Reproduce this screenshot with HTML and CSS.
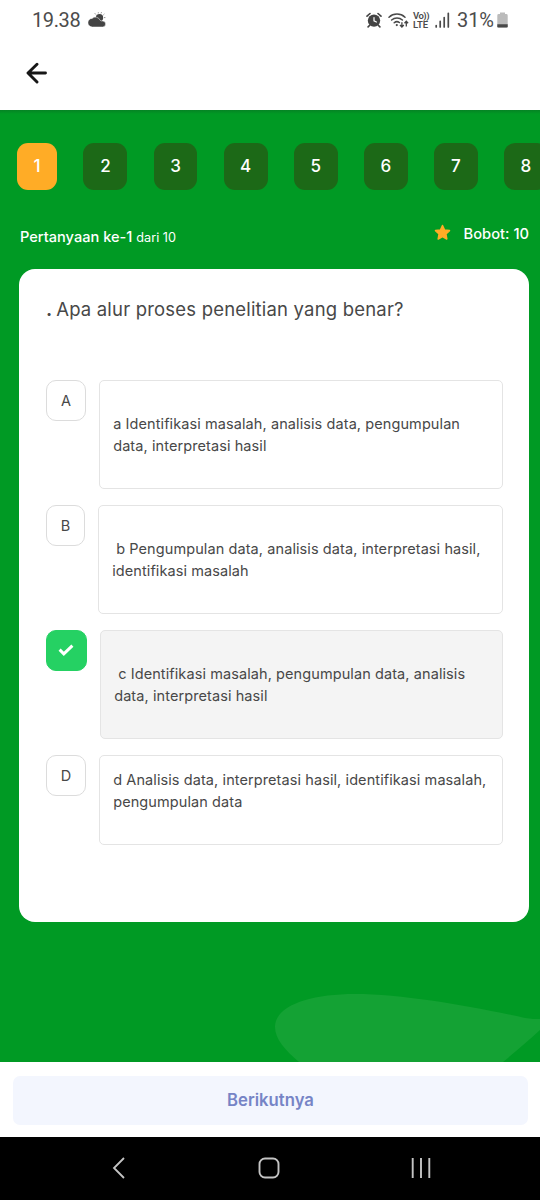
FILE: index.html
```html
<!DOCTYPE html>
<html lang="id">
<head>
<meta charset="utf-8">
<title>Pertanyaan</title>
<link rel="stylesheet" href="styles.css">
</head>
<body>
<div class="phone">
  <header class="top">
    <div class="status">
      <span class="clock">19.38</span>
      <svg class="weather" width="18" height="16" viewBox="0 0 18 16">
        <circle cx="11.500" cy="5.800" r="3.700" fill="#444"/>
        <g stroke="#777" stroke-width=".8" stroke-linecap="round"><path d="M7.600 2.200L7 1.500M10.300 1V.6M13.200 1l.2-.5M15.600 2.700l.5-.5M16.400 5.600h.6"/></g>
        <path d="M4.400 15a4.300 4.300 0 0 1-.3-8.600 5 5 0 0 1 8 1.900c.6.600 1.400.8 2.400.700a3 3 0 0 1 .2 6z" fill="#444" stroke="#fff" stroke-width=".5"/>
      </svg>
      <svg class="alarm" width="16" height="16" viewBox="0 0 16 16">
        <circle cx="8" cy="8.600" r="6.200" fill="#444"/>
        <path d="M1 4.200L4 1.500M15 4.200L12 1.500M3.700 13.200l-1.600 1.700M12.300 13.200l1.600 1.700" stroke="#444" stroke-width="1.600" stroke-linecap="round"/>
        <path d="M8 5.500v3.300l2.400 1.200" stroke="#fff" stroke-width="1.200" fill="none" stroke-linecap="round"/>
      </svg>
      <svg class="wifi" width="21" height="17" viewBox="0 0 21 17">
        <g fill="none" stroke="#4a4a4a" stroke-width="1.500" stroke-linecap="round"><path d="M1 5.200a11.800 11.800 0 0 1 16 0M3.600 8a8 8 0 0 1 10.800 0M6.200 10.800a4.200 4.200 0 0 1 5.200-.3"/></g>
        <circle cx="8.800" cy="13.100" r="1.100" fill="#4a4a4a"/>
        <path d="M13.900 10.200v4.600M12 13l1.900 2 1.900-2M18.300 14.600v-5M16.500 11.300l1.800-2 1.800 2" stroke="#444" stroke-width="1.300" fill="none"/>
      </svg>
      <span class="volte"><span class="vo">Vo))</span><span class="lte">LTE</span></span>
      <svg class="signal" width="15" height="16" viewBox="0 0 15 16"><path d="M1.200 15v-1.500M5.200 15V9.400M9.200 15V5.500M13.300 15V1.300" stroke="#4a4a4a" stroke-width="1.700" stroke-linecap="round"/></svg>
      <span class="percent">31%</span>
      <svg class="battery" width="11" height="16" viewBox="0 0 11 16"><path d="M3 2V.6h5V2h1.300A1.400 1.400 0 0 1 10.700 3.400V15.500H.300V3.400A1.400 1.400 0 0 1 1.700 2z" fill="#bbb"/><path d="M.3 12.300h10.400v2a1.200 1.200 0 0 1-1.200 1.200h-8A1.200 1.200 0 0 1 .3 14.300z" fill="#484848"/></svg>
    </div>
    <svg class="back" width="22" height="22" viewBox="0 0 22 22"><path d="M19.500 11H2.500M11 2.200L2 11l9 9" fill="none" stroke="#171717" stroke-width="2.900" stroke-linecap="round" stroke-linejoin="round"/></svg>
  </header>

  <main class="quiz">
    <svg class="blob" width="265" height="68" viewBox="0 0 265 68"><path d="M24 68C10 56 0 45 0 33C0 12 34 0 80 0C130 0 200 13 250 24C256 25 260 25 265 25V36C252 48 240 58 228 68Z" fill="#14a234"/></svg>
    <nav class="chips">
      <span class="chip current">1</span><span class="chip">2</span><span class="chip">3</span><span class="chip">4</span><span class="chip">5</span><span class="chip">6</span><span class="chip">7</span><span class="chip">8</span>
    </nav>
    <div class="meta">
      <p class="progress">Pertanyaan ke-1 <small>dari 10</small></p>
      <p class="weight">
        <svg width="17" height="17" viewBox="0 0 17 17"><path d="M8.500 1.500l2.100 4.500 4.900.6-3.600 3.400.9 5-4.300-2.500-4.300 2.500.9-5L1.500 6.600l4.900-.6z" fill="#ffac26" stroke="#ffac26" stroke-width="1.500" stroke-linejoin="round"/></svg>
        <span>Bobot: 10</span>
      </p>
    </div>
    <section class="card">
      <h1 class="question"><b>.</b> <span>Apa alur proses penelitian yang benar?</span></h1>
      <div class="option opt-a">
        <span class="key">A</span>
        <p class="answer">a Identifikasi masalah, analisis data, pengumpulan<br>data, interpretasi hasil</p>
      </div>
      <div class="option opt-b">
        <span class="key">B</span>
        <p class="answer"><span class="lead">b Pengumpulan data, analisis data, interpretasi hasil,</span><br>identifikasi masalah</p>
      </div>
      <div class="option opt-c">
        <span class="key checked"><svg width="16" height="14" viewBox="0 0 16 14"><path d="M1.600 6.600l4.200 4.200L14.400 2.600" fill="none" stroke="#fff" stroke-width="3"/></svg></span>
        <p class="answer selected"><span class="lead">c Identifikasi masalah, pengumpulan data, analisis</span><br>data, interpretasi hasil</p>
      </div>
      <div class="option opt-d">
        <span class="key">D</span>
        <p class="answer short">d Analisis data, interpretasi hasil, identifikasi masalah,<br>pengumpulan data</p>
      </div>
    </section>
  </main>

  <footer class="actions"><button class="next">Berikutnya</button></footer>
  <div class="navbar">
    <svg width="14" height="24" viewBox="0 0 14 24"><path d="M12 2L2 12l10 10" fill="none" stroke="#c4c4c4" stroke-width="1.800"/></svg>
    <svg class="home" width="22" height="22" viewBox="0 0 22 22"><rect x="1.500" y="1.500" width="19" height="19" rx="5.500" fill="none" stroke="#c4c4c4" stroke-width="1.900"/></svg>
    <svg class="recent" width="22" height="22" viewBox="0 0 22 22"><path d="M2.700 1v20M11 1v20M19.300 1v20" stroke="#c4c4c4" stroke-width="1.900"/></svg>
  </div>
</div>
</body>
</html>
```
FILE: styles.css
```css
* { box-sizing: border-box; }
body, p, h1 { margin: 0; }
body { font-family: Inter, "Liberation Sans", sans-serif; color: #484848; background: #fff; }
.phone { width: 540px; height: 1200px; display: flex; flex-direction: column; overflow: hidden; }

.top { height: 110px; flex: none; background: #fff; }
.status { height: 40px; display: flex; align-items: center; padding: 0 32px 0 32px; font-family: Roboto, sans-serif; color: #4c4c4c; }
.clock { font-size: 20px; letter-spacing: -.4px; width: 48px; }
.weather { margin-left: 8px; }
.alarm { margin-left: auto; }
.wifi { margin-left: 6px; }
.volte { display: flex; flex-direction: column; width: 17px; margin-left: 4px; font-size: 9.500px; line-height: 9px; font-weight: 600; white-space: nowrap; }
.vo { letter-spacing: -.5px; }
.lte { letter-spacing: -.1px; }
.signal { margin-left: 5px; }
.percent { margin-left: 7px; font-size: 20px; width: 37px; letter-spacing: -.1px; }
.battery { margin-left: 3px; }
.back { display: block; margin: 22px 0 0 26px; }

.quiz { position: relative; height: 952px; flex: none; background: linear-gradient(#058424, #009a24 4px); padding-top: 33px; overflow: hidden; }
.blob { position: absolute; right: 0; bottom: 0; }
.chips { display: flex; gap: 26.200px; padding-left: 16.800px; height: 47px; }
.chip { flex: none; width: 43.900px; border-radius: 11px; background: #1c6917; color: #fff; font-size: 17px; font-weight: 450; line-height: 47px; text-align: center; }
.current { width: 40.500px; background: #ffac26; }
.meta { display: flex; justify-content: space-between; padding: 33px 11px 0 20px; height: 79px; color: #fff; }
.progress { font-size: 14.600px; font-weight: 500; line-height: 20px; padding-top: 4px; white-space: nowrap; }
.progress small { font-size: 12.700px; font-weight: 400; }
.weight { display: flex; gap: 12.500px; height: 20px; padding-top: 1px; line-height: 20px; font-size: 14.700px; font-weight: 500; }

.card { margin: 0 11px 0 19.400px; height: 653.400px; border-radius: 16px; background: #fff; padding: 27px 26px 0 26.600px; }
.question { font-size: 18.500px; font-weight: 400; line-height: 26px; height: 84.400px; white-space: nowrap; letter-spacing: .19px; }
.question b { margin-right: -1.600px; }
.option { display: flex; gap: 13px; margin-bottom: 16px; }
.key { flex: none; display: flex; align-items: center; justify-content: center; width: 40px; height: 41px; border: 1px solid #dcdcdc; border-radius: 10px; font-size: 14.500px; padding-bottom: 1px; }
.opt-b .key { width: 39px; }
.opt-c .key { width: 41px; }
.checked { background: #25d163; border-color: #25d163; }
.answer { flex: 1; height: 109px; padding: 31.300px 0 0 13.200px; border: 1px solid #e4e4e4; border-radius: 5px; font-size: 14.500px; line-height: 22px; letter-spacing: .09px; white-space: nowrap; }
.lead { margin-left: 4px; }
.selected { background: #f4f4f4; }
.short { height: 90px; padding-top: 12.300px; }

.actions { height: 75px; flex: none; background: #fff; padding: 14px 12px 0 13px; }
.next { display: block; width: 100%; height: 49px; border: 0; border-radius: 7px; background: #f3f6fe; color: #7684c6; font: 600 16.700px Inter, sans-serif; padding: 0 0 2px; }
.navbar { flex: 1; background: #000; display: flex; align-items: center; padding: 0 0 2px 112px; }
.home { margin-left: 132px; }
.recent { margin-left: 130px; }
```
